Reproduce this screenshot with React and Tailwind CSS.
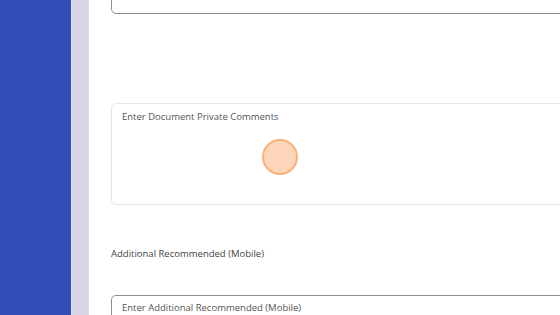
import React from 'react'

const App = () => {
    return (
        <div className="flex h-[315px] w-[560px] overflow-hidden bg-white" style={{ fontFamily: '"Open Sans", "Noto Sans", sans-serif' }}>
            {/* Sidebar */}
            <div className="w-[71px] shrink-0 bg-[#314db7]" />
            <div className="w-[18px] shrink-0 border-l border-[#e4e4f0] bg-[#d6d6e6]" />

            {/* Form */}
            <div className="flex-1 pl-[22px]">
                <div className="-mt-[27px] h-[41px] w-[520px] rounded-[5px] border border-[#8f8f8f]" />

                <div className="relative mt-[89px] h-[102px] w-[520px] rounded-[5px] border border-[#e6e6e6] px-[10px] pt-[6px]">
                    <p className="text-[9.5px] text-[#555]">Enter Document Private Comments</p>
                    <div className="absolute left-[150px] top-[35px] h-[36px] w-[36px] rounded-full border-2 border-[#f9b27c] bg-[#fdd6b9]" />
                </div>

                <p className="mt-[42px] text-[9.5px] text-[#444]">Additional Recommended (Mobile)</p>

                <div className="mt-[34px] h-[40px] w-[520px] rounded-[5px] border border-[#8f8f8f] px-[10px] pt-[5px]">
                    <p className="text-[9.5px] text-[#555]">Enter Additional Recommended (Mobile)</p>
                </div>
            </div>
        </div>
    )
}

export default App
